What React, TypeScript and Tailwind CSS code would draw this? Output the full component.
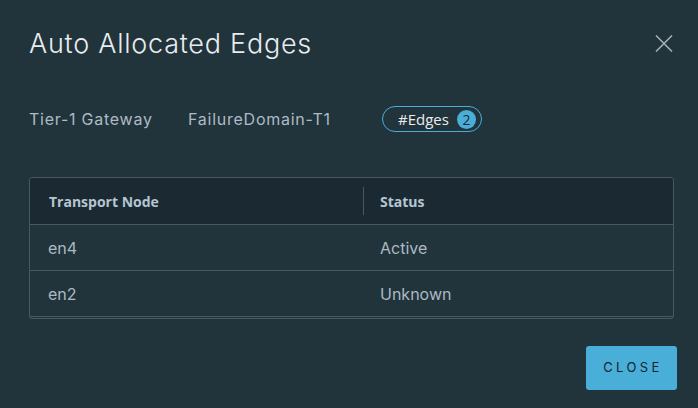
import React from "react";

export default function App() {
  return (
    <div className="w-[698px] h-[408px] bg-[#21333b] flex flex-col px-[29px] pt-[24px] overflow-hidden" style={{ fontFamily: "Inter, Lato, sans-serif" }}>
      <div className="flex items-start justify-between h-[40px]">
        <h1 className="text-[27px] leading-[40px] text-[#e8ecef] font-light tracking-[0.75px]">Auto Allocated Edges</h1>
        <button className="mt-[11px] mr-[-4px] text-[#a3adb3]">
          <svg width="18" height="17" viewBox="0 0 18 17" fill="none" stroke="currentColor" strokeWidth="1.6">
            <path d="M1 0.5 L17 16.5 M17 0.5 L1 16.5" />
          </svg>
        </button>
      </div>
      <div className="flex items-center mt-[42px] h-[26px] text-[16px] text-[#adbbc4] tracking-[0.75px]">
        <span className="w-[159px]">Tier-1 Gateway</span>
        <span className="w-[194px]">FailureDomain-T1</span>
        <span className="flex items-center h-[26px] w-[100px] border border-[#49afd9] rounded-full pl-[15px] text-[15px] tracking-normal text-[#e8ecef]" style={{ fontFamily: "'Open Sans', sans-serif" }}>
          #Edges
          <span className="ml-[8px] w-[19px] h-[19px] rounded-full bg-[#49afd9] text-[#1b2a32] text-[14px] flex items-center justify-center">2</span>
        </span>
      </div>
      <div className="mt-[45px] w-[645px] h-[142px] border border-[#485864] rounded-[3px] overflow-hidden">
        <div className="flex h-[47px] bg-[#1b2a32] border-b border-[#485864] text-[14px] font-bold text-[#b5c6d2]" style={{ fontFamily: "'Open Sans', sans-serif" }}>
          <div className="w-[334px] pl-[19px] flex items-center border-r border-[#485864] my-[9px]">Transport Node</div>
          <div className="pl-[16px] flex items-center">Status</div>
        </div>
        <div className="flex h-[46px] border-b border-[#485864] text-[16px] text-[#acbac3] items-center">
          <div className="w-[334px] pl-[18px]">en4</div>
          <div className="pl-[16px]">Active</div>
        </div>
        <div className="flex h-[46px] border-b border-[#485864] text-[16px] text-[#acbac3] items-center">
          <div className="w-[334px] pl-[18px]">en2</div>
          <div className="pl-[16px]">Unknown</div>
        </div>
      </div>
      <div className="flex justify-end mt-[27px] mr-[-8px]">
        <button className="w-[91px] h-[44px] rounded-[3px] bg-[#49afd9] text-[#17252c] text-[13px] tracking-[3.4px] font-normal pl-[3px]">CLOSE</button>
      </div>
    </div>
  );
}
